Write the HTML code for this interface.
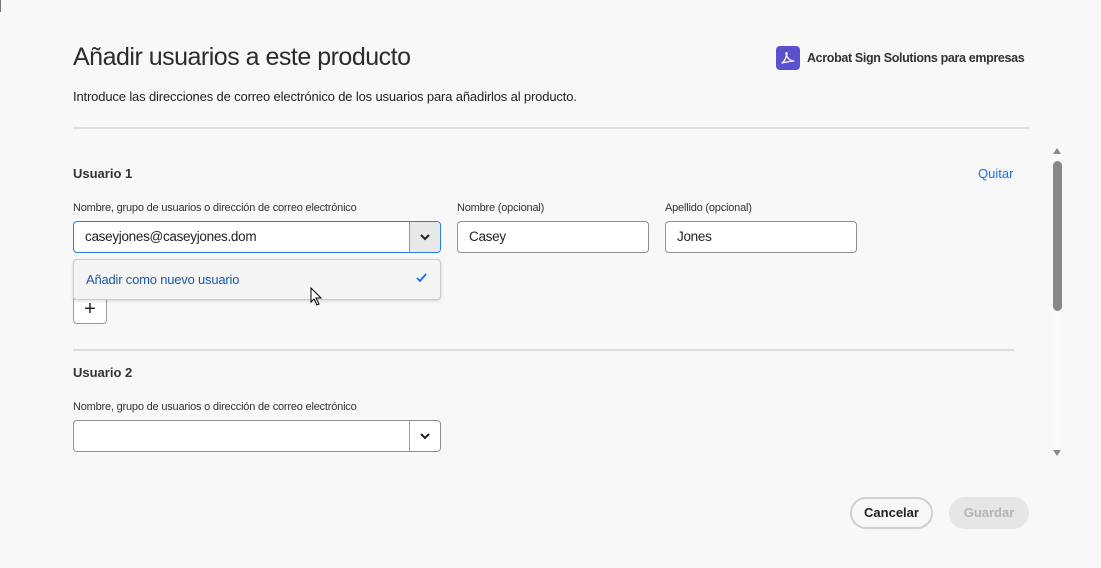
<!DOCTYPE html>
<html><head><meta charset="utf-8"><style>
*{box-sizing:border-box;margin:0;padding:0}
body{width:1101px;height:568px;background:#f8f8f8;font-family:"Liberation Sans",sans-serif;color:#222;position:relative;overflow:hidden}
.a{position:absolute}
h1{position:absolute;left:73px;top:43px;font-size:25px;font-weight:normal;color:#2c2c2c;letter-spacing:-0.5px}
.sub{left:73px;top:89px;font-size:13px;color:#222;letter-spacing:-0.15px}
.lbl{font-size:11px;color:#333;letter-spacing:-0.2px}
.inp{background:#fff;border:1px solid #909090;border-radius:4px;height:32px;font-size:13.5px;padding:7px 11px;color:#222;letter-spacing:-0.3px}
.b{font-weight:bold;font-size:13px;color:#333}
</style></head><body>
<div class="a" style="left:0;top:0;width:1px;height:12px;background:#777"></div>
<h1>Añadir usuarios a este producto</h1>
<div class="a" style="left:776px;top:46px;width:24px;height:24px;background:#5a4fcf;border-radius:4px">
<svg width="24" height="24" viewBox="0 0 24 24"><path d="M6 17c2-1 4-5 5-9 0-2-1-2-1 0 1 4 4 7 8 7-3 0-7 1-12 2z" fill="none" stroke="#fff" stroke-width="1.3" stroke-linejoin="round"/></svg></div>
<div class="a b" style="left:807px;top:51px;font-size:12.5px;letter-spacing:-0.35px">Acrobat Sign Solutions para empresas</div>
<div class="a sub">Introduce las direcciones de correo electrónico de los usuarios para añadirlos al producto.</div>
<div class="a" style="left:73px;top:127px;width:956px;height:2px;background:#ddd"></div>
<div class="a b" style="left:73px;top:166px">Usuario 1</div>
<div class="a" style="left:978px;top:166px;font-size:13px;color:#1473e6">Quitar</div>
<div class="a lbl" style="left:73px;top:202px">Nombre, grupo de usuarios o dirección de correo electrónico</div>
<div class="a lbl" style="left:457px;top:202px">Nombre (opcional)</div>
<div class="a lbl" style="left:665px;top:202px">Apellido (opcional)</div>
<div class="a inp" style="left:73px;top:221px;width:368px;border-color:#2680eb">caseyjones@caseyjones.dom</div>
<div class="a" style="left:409px;top:222px;width:31px;height:30px;background:#e8e8e8;border-left:1px solid #999;border-radius:0 3px 3px 0"></div>
<svg class="a" style="left:418px;top:230px" width="14" height="14"><path d="M3 5l4 4 4-4" fill="none" stroke="#222" stroke-width="2"/></svg>
<div class="a inp" style="left:457px;top:221px;width:192px">Casey</div>
<div class="a inp" style="left:665px;top:221px;width:192px">Jones</div>
<div class="a" style="left:73px;top:296px;width:34px;height:28px;border:1px solid #999;border-radius:4px;background:#fff;font-size:20px;text-align:center;line-height:25px">+</div>
<div class="a" style="left:73px;top:259px;width:368px;height:41px;background:#f4f4f4;border:1px solid #ccc;border-radius:4px;box-shadow:0 1px 3px rgba(0,0,0,.15)"></div>
<div class="a" style="left:86px;top:272px;font-size:13px;color:#1a5aa8;letter-spacing:-0.2px">Añadir como nuevo usuario</div>
<svg class="a" style="left:415px;top:272px" width="14" height="12"><path d="M2 6l3 3 6-7" fill="none" stroke="#1473e6" stroke-width="1.8"/></svg>
<svg class="a" style="left:310px;top:287px" width="14" height="20"><path d="M1 1v14l3-3 3 6 2-1-3-6h5z" fill="#fff" stroke="#000" stroke-width="1"/></svg>
<div class="a" style="left:73px;top:349px;width:941px;height:2px;background:#ddd"></div>
<div class="a b" style="left:73px;top:365px">Usuario 2</div>
<div class="a lbl" style="left:73px;top:401px">Nombre, grupo de usuarios o dirección de correo electrónico</div>
<div class="a inp" style="left:73px;top:420px;width:368px"></div>
<div class="a" style="left:409px;top:421px;width:1px;height:30px;background:#999"></div>
<svg class="a" style="left:418px;top:429px" width="14" height="14"><path d="M3 5l4 4 4-4" fill="none" stroke="#222" stroke-width="2"/></svg>
<div class="a" style="left:1053px;top:148px;width:8px;height:306px;background:#fafafa"></div>
<svg class="a" style="left:1052px;top:146px" width="10" height="9"><path d="M1 8l4-6 4 6z" fill="#888"/></svg>
<div class="a" style="left:1053px;top:161px;width:9px;height:150px;background:#888;border-radius:5px"></div>
<svg class="a" style="left:1052px;top:449px" width="10" height="9"><path d="M1 1l4 6 4-6z" fill="#888"/></svg>
<div class="a" style="left:850px;top:497px;width:83px;height:32px;border:2px solid #d0d0d0;border-radius:16px;font-weight:bold;font-size:13px;text-align:center;line-height:28px;color:#222">Cancelar</div>
<div class="a" style="left:949px;top:497px;width:80px;height:32px;background:#e6e6e6;border-radius:16px;font-weight:bold;font-size:13px;text-align:center;line-height:32px;color:#b3b3b3">Guardar</div>
</body></html>
